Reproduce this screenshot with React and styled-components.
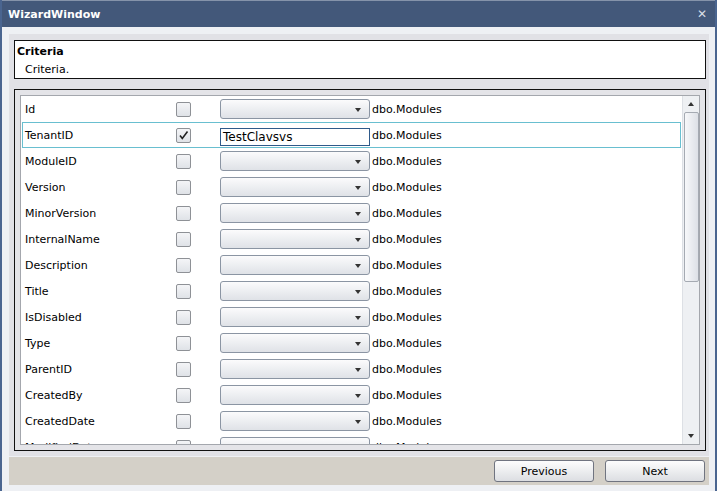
import React from "react"
import styled, { createGlobalStyle } from "styled-components"

const GlobalStyle = createGlobalStyle`
  html, body {
    margin: 0;
    padding: 0;
    background: #eef0f4;
  }
  body {
    font-family: Tahoma, "DejaVu Sans", Verdana, sans-serif;
    font-size: 11px;
    color: #000;
  }
`

const Window = styled.div`
  width: 717px;
  height: 491px;
  box-sizing: border-box;
  border-left: 2px solid #4a6590;
  border-right: 2px solid #4a6590;
  display: flex;
  flex-direction: column;
  background: #eef0f4;
  overflow: hidden;
`

const TitleBar = styled.div`
  height: 27px;
  flex: none;
  box-sizing: border-box;
  background: #43587a;
  border-top: 1px solid #8593aa;
  display: flex;
  align-items: center;
  justify-content: space-between;
  padding: 0 8px 0 6px;
  color: #fff;
  font-weight: bold;
  font-size: 11px;
`

const CloseButton = styled.span`
  color: #d8dde6;
  font-size: 12px;
  font-weight: bold;
  line-height: 1;
`

const Body = styled.div`
  flex: 1;
  display: flex;
  flex-direction: column;
  padding: 7px 6px 6px 7px;
`

const Panel = styled.div`
  background: #e1e1e6;
  padding: 6px 3px 5px 5px;
  display: flex;
  flex-direction: column;
  gap: 10px;
`

const CriteriaBox = styled.div`
  height: 39px;
  box-sizing: border-box;
  border: 1px solid #111;
  background: #fff;
  padding: 3px 2px;
`

const CriteriaTitle = styled.div`
  font-weight: bold;
  font-size: 11px;
  line-height: 15px;
`

const CriteriaText = styled.div`
  padding-left: 8px;
  margin-top: 2px;
  font-size: 11px;
  line-height: 18px;
`

const GridFrame = styled.div`
  height: 362px;
  box-sizing: border-box;
  border: 1px solid #111;
  background: #e4e4e8;
  padding: 5px;
  display: flex;
`

const ListArea = styled.div`
  flex: 1;
  border: 1px solid #a4a7ad;
  background: #fff;
  display: flex;
  overflow: hidden;
`

const Rows = styled.div`
  flex: 1;
  padding: 0 1px;
  overflow: hidden;
`

const Row = styled.div`
  height: 26px;
  box-sizing: border-box;
  display: flex;
  align-items: center;
  padding-left: 2px;
  border: 1px solid ${p => (p.$selected ? "#69bfd0" : "transparent")};
`

const FieldName = styled.div`
  width: 151px;
  font-size: 11px;
`

const Check = styled.div`
  width: 13px;
  height: 13px;
  border: 1px solid #8e9196;
  border-radius: 2px;
  background: linear-gradient(#f4f5f7, #dfe2e7);
  margin-right: 29px;
  display: flex;
  align-items: center;
  justify-content: center;
`

const Combo = styled.div`
  width: 150px;
  height: 20px;
  box-sizing: border-box;
  border: 1px solid #8b95a3;
  border-radius: 3px;
  background: linear-gradient(#fbfbfc, #dfe2e7);
  display: flex;
  align-items: center;
  justify-content: flex-end;
  padding-right: 8px;
`

const Arrow = styled.span`
  width: 0;
  height: 0;
  border-left: 3.5px solid transparent;
  border-right: 3.5px solid transparent;
  border-top: 4px solid #333;
  margin-top: 2px;
`

const TextInput = styled.div`
  width: 150px;
  height: 18px;
  margin-top: 3px;
  box-sizing: border-box;
  border: 1px solid #2f5a8a;
  background: #fff;
  font-size: 12px;
  display: flex;
  align-items: flex-end;
  padding: 0 2px 0;
  line-height: 15px;
`

const Table = styled.div`
  margin-left: 2px;
  font-size: 11px;
`

const ScrollBar = styled.div`
  width: 16px;
  display: flex;
  flex-direction: column;
  background: #eef0f3;
  border-left: 1px solid #dde0e5;
`

const ScrollBtn = styled.div`
  height: 16px;
  display: flex;
  align-items: center;
  justify-content: center;
`

const ScrollArrow = styled.span`
  width: 0;
  height: 0;
  border-left: 3.5px solid transparent;
  border-right: 3.5px solid transparent;
  ${p => (p.$up ? "border-bottom: 4px solid #333;" : "border-top: 4px solid #333;")}
`

const ScrollTrack = styled.div`
  flex: 1;
  display: flex;
  flex-direction: column;
`

const Thumb = styled.div`
  height: 170px;
  box-sizing: border-box;
  margin: 0 0 0 1px;
  border: 1px solid #a5aab2;
  border-radius: 2px;
  background: linear-gradient(90deg, #f7f8fa, #dde0e6);
`

const Footer = styled.div`
  margin-top: 1px;
  height: 28px;
  box-sizing: border-box;
  background: #d4d0c8;
  display: flex;
  align-items: center;
  justify-content: flex-end;
  gap: 11px;
  padding-right: 4px;
`

const Button = styled.button`
  width: 100px;
  height: 22px;
  border: 1px solid #707480;
  border-radius: 3px;
  background: linear-gradient(#fdfdfd, #dcdee2);
  font-family: inherit;
  font-size: 11px;
  color: #000;
  padding: 0;
`

const fields = [
  "Id",
  "TenantID",
  "ModuleID",
  "Version",
  "MinorVersion",
  "InternalName",
  "Description",
  "Title",
  "IsDisabled",
  "Type",
  "ParentID",
  "CreatedBy",
  "CreatedDate",
  "ModifiedDate",
]

const CheckMark = () => (
  <svg width="11" height="11" viewBox="0 0 11 11">
    <path d="M2 5.5 L4.3 8.5 L9.5 1.5" fill="none" stroke="#222" strokeWidth="1.6" />
  </svg>
)

export default function App() {
  return (
    <>
      <GlobalStyle />
      <Window>
        <TitleBar>
          <span>WizardWindow</span>
          <CloseButton>✕</CloseButton>
        </TitleBar>
        <Body>
          <Panel>
            <CriteriaBox>
              <CriteriaTitle>Criteria</CriteriaTitle>
              <CriteriaText>Criteria.</CriteriaText>
            </CriteriaBox>
            <GridFrame>
              <ListArea>
                <Rows>
                  {fields.map(name => {
                    const selected = name === "TenantID"
                    return (
                      <Row key={name} $selected={selected}>
                        <FieldName>{name}</FieldName>
                        <Check>{selected && <CheckMark />}</Check>
                        {selected ? (
                          <TextInput>TestClavsvs</TextInput>
                        ) : (
                          <Combo>
                            <Arrow />
                          </Combo>
                        )}
                        <Table>dbo.Modules</Table>
                      </Row>
                    )
                  })}
                </Rows>
                <ScrollBar>
                  <ScrollBtn>
                    <ScrollArrow $up />
                  </ScrollBtn>
                  <ScrollTrack>
                    <Thumb />
                  </ScrollTrack>
                  <ScrollBtn>
                    <ScrollArrow />
                  </ScrollBtn>
                </ScrollBar>
              </ListArea>
            </GridFrame>
          </Panel>
          <Footer>
            <Button>Previous</Button>
            <Button>Next</Button>
          </Footer>
        </Body>
      </Window>
    </>
  )
}
